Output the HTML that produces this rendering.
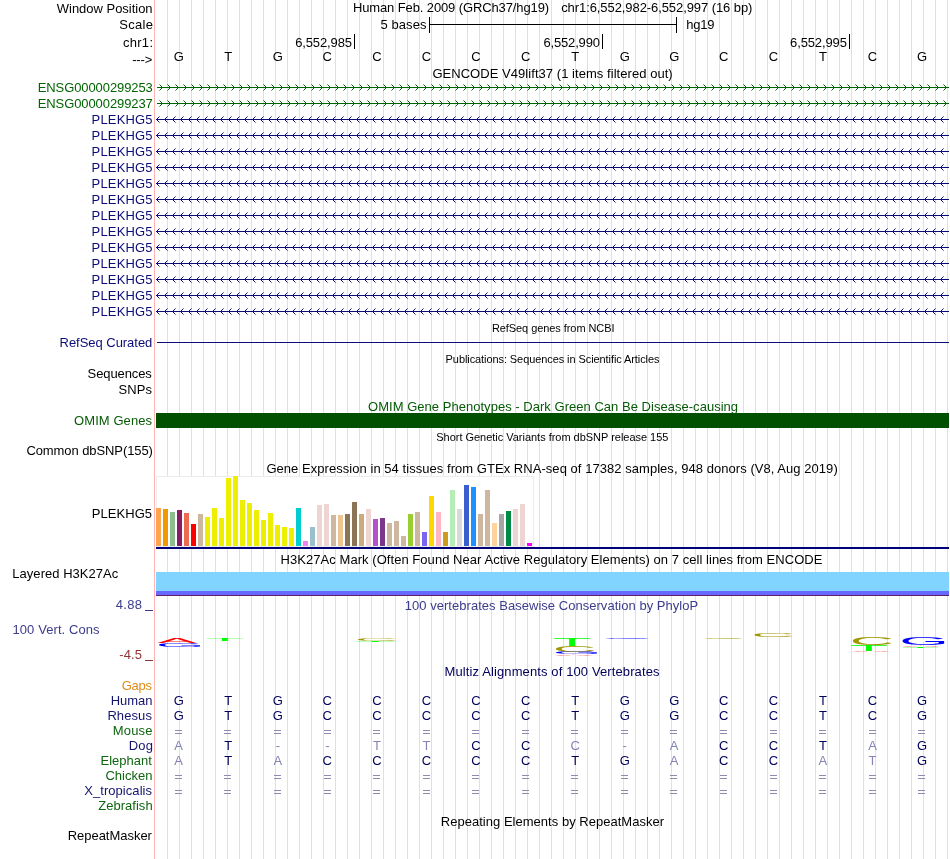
<!DOCTYPE html><html><head><meta charset="utf-8"><title>UCSC Genome Browser</title><style>
html,body{margin:0;padding:0;background:#fff;overflow:hidden}svg{display:block;will-change:transform}
text{font-family:"Liberation Sans",sans-serif;font-size:13px;fill:#000}
.c{text-anchor:middle}
.nv{fill:#0c0c78}.gr{fill:#006400}.bl{fill:#00005a}.lt{fill:#8484b6}
</style></head><body>
<svg width="950" height="859" viewBox="0 0 950 859">
<rect width="950" height="859" fill="#fff"/>
<path d="M167.5 0V859M179.5 0V859M191.5 0V859M203.5 0V859M215.5 0V859M227.5 0V859M239.5 0V859M251.5 0V859M263.5 0V859M275.5 0V859M287.5 0V859M299.5 0V859M311.5 0V859M323.5 0V859M335.5 0V859M347.5 0V859M359.5 0V859M371.5 0V859M383.5 0V859M395.5 0V859M407.5 0V859M419.5 0V859M431.5 0V859M443.5 0V859M455.5 0V859M467.5 0V859M479.5 0V859M491.5 0V859M503.5 0V859M515.5 0V859M527.5 0V859M539.5 0V859M551.5 0V859M563.5 0V859M575.5 0V859M587.5 0V859M599.5 0V859M611.5 0V859M623.5 0V859M635.5 0V859M647.5 0V859M659.5 0V859M671.5 0V859M683.5 0V859M695.5 0V859M707.5 0V859M719.5 0V859M731.5 0V859M743.5 0V859M755.5 0V859M767.5 0V859M779.5 0V859M791.5 0V859M803.5 0V859M815.5 0V859M827.5 0V859M839.5 0V859M851.5 0V859M863.5 0V859M875.5 0V859M887.5 0V859M899.5 0V859M911.5 0V859M923.5 0V859M935.5 0V859M947.5 0V859" stroke="#dcdcff" stroke-width="1" fill="none" shape-rendering="crispEdges"/>
<rect x="154" y="0" width="1" height="859" fill="#ffb4b4"/>
<text x="56.80" transform="translate(0 12.6) scale(1 1.05)" style="letter-spacing:-0.014px">Window Position</text>
<text x="119.35" transform="translate(0 29.4) scale(1 1.05)" style="letter-spacing:0.300px">Scale</text>
<text x="122.95" transform="translate(0 46.8) scale(1 1.05)" style="letter-spacing:0.300px">chr1:</text>
<text x="132.20" transform="translate(0 63.9) scale(1 1.05)" style="letter-spacing:-0.167px">---&gt;</text>
<text x="352.90" transform="translate(0 11.9) scale(1 1.05)" style="letter-spacing:-0.107px">Human Feb. 2009 (GRCh37/hg19)</text>
<text x="561.20" transform="translate(0 11.9) scale(1 1.05)" style="letter-spacing:-0.074px">chr1:6,552,982-6,552,997 (16 bp)</text>
<text x="380.40" transform="translate(0 28.7) scale(1 1.05)" style="letter-spacing:0.100px">5 bases</text>
<text x="686.20" transform="translate(0 28.7) scale(1 1.05)" style="letter-spacing:-0.200px">hg19</text>
<path d="M429.5 17V33M676.5 17V33M429 24.5H677" stroke="#000" fill="none" shape-rendering="crispEdges"/>
<text x="295.20" transform="translate(0 47) scale(1 1.05)" style="letter-spacing:-0.125px">6,552,985</text>
<rect x="354" y="34" width="1" height="15" fill="#000"/>
<text x="543.50" transform="translate(0 47) scale(1 1.05)" style="letter-spacing:-0.162px">6,552,990</text>
<rect x="602" y="34" width="1" height="15" fill="#000"/>
<text x="790.10" transform="translate(0 47) scale(1 1.05)" style="letter-spacing:-0.125px">6,552,995</text>
<rect x="849" y="34" width="1" height="15" fill="#000"/>
<text x="178.7" transform="translate(0 61) scale(1 1.05)" class="c">G</text>
<text x="228.2" transform="translate(0 61) scale(1 1.05)" class="c">T</text>
<text x="277.8" transform="translate(0 61) scale(1 1.05)" class="c">G</text>
<text x="327.3" transform="translate(0 61) scale(1 1.05)" class="c">C</text>
<text x="376.9" transform="translate(0 61) scale(1 1.05)" class="c">C</text>
<text x="426.5" transform="translate(0 61) scale(1 1.05)" class="c">C</text>
<text x="476.0" transform="translate(0 61) scale(1 1.05)" class="c">C</text>
<text x="525.6" transform="translate(0 61) scale(1 1.05)" class="c">C</text>
<text x="575.1" transform="translate(0 61) scale(1 1.05)" class="c">T</text>
<text x="624.7" transform="translate(0 61) scale(1 1.05)" class="c">G</text>
<text x="674.2" transform="translate(0 61) scale(1 1.05)" class="c">G</text>
<text x="723.8" transform="translate(0 61) scale(1 1.05)" class="c">C</text>
<text x="773.4" transform="translate(0 61) scale(1 1.05)" class="c">C</text>
<text x="822.9" transform="translate(0 61) scale(1 1.05)" class="c">T</text>
<text x="872.5" transform="translate(0 61) scale(1 1.05)" class="c">C</text>
<text x="922.1" transform="translate(0 61) scale(1 1.05)" class="c">G</text>
<text x="432.40" transform="translate(0 77.7) scale(1 1.05)" style="letter-spacing:0.056px">GENCODE V49lift37 (1 items filtered out)</text>
<text x="37.70" transform="translate(0 91.8) scale(1 1.05)" style="letter-spacing:-0.079px;fill:#006400">ENSG00000299253</text>
<rect x="157" y="87" width="792" height="1" fill="#006400"/>
<path d="M159.5 84.5l3 3l-3 3M167.5 84.5l3 3l-3 3M175.5 84.5l3 3l-3 3M183.5 84.5l3 3l-3 3M191.5 84.5l3 3l-3 3M199.5 84.5l3 3l-3 3M207.5 84.5l3 3l-3 3M215.5 84.5l3 3l-3 3M223.5 84.5l3 3l-3 3M231.5 84.5l3 3l-3 3M239.5 84.5l3 3l-3 3M247.5 84.5l3 3l-3 3M255.5 84.5l3 3l-3 3M263.5 84.5l3 3l-3 3M271.5 84.5l3 3l-3 3M279.5 84.5l3 3l-3 3M287.5 84.5l3 3l-3 3M295.5 84.5l3 3l-3 3M303.5 84.5l3 3l-3 3M311.5 84.5l3 3l-3 3M319.5 84.5l3 3l-3 3M327.5 84.5l3 3l-3 3M335.5 84.5l3 3l-3 3M343.5 84.5l3 3l-3 3M351.5 84.5l3 3l-3 3M359.5 84.5l3 3l-3 3M367.5 84.5l3 3l-3 3M375.5 84.5l3 3l-3 3M383.5 84.5l3 3l-3 3M391.5 84.5l3 3l-3 3M399.5 84.5l3 3l-3 3M407.5 84.5l3 3l-3 3M415.5 84.5l3 3l-3 3M423.5 84.5l3 3l-3 3M431.5 84.5l3 3l-3 3M439.5 84.5l3 3l-3 3M447.5 84.5l3 3l-3 3M455.5 84.5l3 3l-3 3M463.5 84.5l3 3l-3 3M471.5 84.5l3 3l-3 3M479.5 84.5l3 3l-3 3M487.5 84.5l3 3l-3 3M495.5 84.5l3 3l-3 3M503.5 84.5l3 3l-3 3M511.5 84.5l3 3l-3 3M519.5 84.5l3 3l-3 3M527.5 84.5l3 3l-3 3M535.5 84.5l3 3l-3 3M543.5 84.5l3 3l-3 3M551.5 84.5l3 3l-3 3M559.5 84.5l3 3l-3 3M567.5 84.5l3 3l-3 3M575.5 84.5l3 3l-3 3M583.5 84.5l3 3l-3 3M591.5 84.5l3 3l-3 3M599.5 84.5l3 3l-3 3M607.5 84.5l3 3l-3 3M615.5 84.5l3 3l-3 3M623.5 84.5l3 3l-3 3M631.5 84.5l3 3l-3 3M639.5 84.5l3 3l-3 3M647.5 84.5l3 3l-3 3M655.5 84.5l3 3l-3 3M663.5 84.5l3 3l-3 3M671.5 84.5l3 3l-3 3M679.5 84.5l3 3l-3 3M687.5 84.5l3 3l-3 3M695.5 84.5l3 3l-3 3M703.5 84.5l3 3l-3 3M711.5 84.5l3 3l-3 3M719.5 84.5l3 3l-3 3M727.5 84.5l3 3l-3 3M735.5 84.5l3 3l-3 3M743.5 84.5l3 3l-3 3M751.5 84.5l3 3l-3 3M759.5 84.5l3 3l-3 3M767.5 84.5l3 3l-3 3M775.5 84.5l3 3l-3 3M783.5 84.5l3 3l-3 3M791.5 84.5l3 3l-3 3M799.5 84.5l3 3l-3 3M807.5 84.5l3 3l-3 3M815.5 84.5l3 3l-3 3M823.5 84.5l3 3l-3 3M831.5 84.5l3 3l-3 3M839.5 84.5l3 3l-3 3M847.5 84.5l3 3l-3 3M855.5 84.5l3 3l-3 3M863.5 84.5l3 3l-3 3M871.5 84.5l3 3l-3 3M879.5 84.5l3 3l-3 3M887.5 84.5l3 3l-3 3M895.5 84.5l3 3l-3 3M903.5 84.5l3 3l-3 3M911.5 84.5l3 3l-3 3M919.5 84.5l3 3l-3 3M927.5 84.5l3 3l-3 3M935.5 84.5l3 3l-3 3M943.5 84.5l3 3l-3 3" stroke="#006400" stroke-width="1" fill="none"/>
<text x="37.70" transform="translate(0 107.8) scale(1 1.05)" style="letter-spacing:-0.079px;fill:#006400">ENSG00000299237</text>
<rect x="157" y="103" width="792" height="1" fill="#006400"/>
<path d="M159.5 100.5l3 3l-3 3M167.5 100.5l3 3l-3 3M175.5 100.5l3 3l-3 3M183.5 100.5l3 3l-3 3M191.5 100.5l3 3l-3 3M199.5 100.5l3 3l-3 3M207.5 100.5l3 3l-3 3M215.5 100.5l3 3l-3 3M223.5 100.5l3 3l-3 3M231.5 100.5l3 3l-3 3M239.5 100.5l3 3l-3 3M247.5 100.5l3 3l-3 3M255.5 100.5l3 3l-3 3M263.5 100.5l3 3l-3 3M271.5 100.5l3 3l-3 3M279.5 100.5l3 3l-3 3M287.5 100.5l3 3l-3 3M295.5 100.5l3 3l-3 3M303.5 100.5l3 3l-3 3M311.5 100.5l3 3l-3 3M319.5 100.5l3 3l-3 3M327.5 100.5l3 3l-3 3M335.5 100.5l3 3l-3 3M343.5 100.5l3 3l-3 3M351.5 100.5l3 3l-3 3M359.5 100.5l3 3l-3 3M367.5 100.5l3 3l-3 3M375.5 100.5l3 3l-3 3M383.5 100.5l3 3l-3 3M391.5 100.5l3 3l-3 3M399.5 100.5l3 3l-3 3M407.5 100.5l3 3l-3 3M415.5 100.5l3 3l-3 3M423.5 100.5l3 3l-3 3M431.5 100.5l3 3l-3 3M439.5 100.5l3 3l-3 3M447.5 100.5l3 3l-3 3M455.5 100.5l3 3l-3 3M463.5 100.5l3 3l-3 3M471.5 100.5l3 3l-3 3M479.5 100.5l3 3l-3 3M487.5 100.5l3 3l-3 3M495.5 100.5l3 3l-3 3M503.5 100.5l3 3l-3 3M511.5 100.5l3 3l-3 3M519.5 100.5l3 3l-3 3M527.5 100.5l3 3l-3 3M535.5 100.5l3 3l-3 3M543.5 100.5l3 3l-3 3M551.5 100.5l3 3l-3 3M559.5 100.5l3 3l-3 3M567.5 100.5l3 3l-3 3M575.5 100.5l3 3l-3 3M583.5 100.5l3 3l-3 3M591.5 100.5l3 3l-3 3M599.5 100.5l3 3l-3 3M607.5 100.5l3 3l-3 3M615.5 100.5l3 3l-3 3M623.5 100.5l3 3l-3 3M631.5 100.5l3 3l-3 3M639.5 100.5l3 3l-3 3M647.5 100.5l3 3l-3 3M655.5 100.5l3 3l-3 3M663.5 100.5l3 3l-3 3M671.5 100.5l3 3l-3 3M679.5 100.5l3 3l-3 3M687.5 100.5l3 3l-3 3M695.5 100.5l3 3l-3 3M703.5 100.5l3 3l-3 3M711.5 100.5l3 3l-3 3M719.5 100.5l3 3l-3 3M727.5 100.5l3 3l-3 3M735.5 100.5l3 3l-3 3M743.5 100.5l3 3l-3 3M751.5 100.5l3 3l-3 3M759.5 100.5l3 3l-3 3M767.5 100.5l3 3l-3 3M775.5 100.5l3 3l-3 3M783.5 100.5l3 3l-3 3M791.5 100.5l3 3l-3 3M799.5 100.5l3 3l-3 3M807.5 100.5l3 3l-3 3M815.5 100.5l3 3l-3 3M823.5 100.5l3 3l-3 3M831.5 100.5l3 3l-3 3M839.5 100.5l3 3l-3 3M847.5 100.5l3 3l-3 3M855.5 100.5l3 3l-3 3M863.5 100.5l3 3l-3 3M871.5 100.5l3 3l-3 3M879.5 100.5l3 3l-3 3M887.5 100.5l3 3l-3 3M895.5 100.5l3 3l-3 3M903.5 100.5l3 3l-3 3M911.5 100.5l3 3l-3 3M919.5 100.5l3 3l-3 3M927.5 100.5l3 3l-3 3M935.5 100.5l3 3l-3 3M943.5 100.5l3 3l-3 3" stroke="#006400" stroke-width="1" fill="none"/>
<text x="91.60" transform="translate(0 123.8) scale(1 1.05)" style="letter-spacing:0.167px;fill:#0c0c78">PLEKHG5</text>
<rect x="156" y="119" width="793" height="1" fill="#0c0c78"/>
<path d="M159.5 116.5l-3 3l3 3M167.5 116.5l-3 3l3 3M175.5 116.5l-3 3l3 3M183.5 116.5l-3 3l3 3M191.5 116.5l-3 3l3 3M199.5 116.5l-3 3l3 3M207.5 116.5l-3 3l3 3M215.5 116.5l-3 3l3 3M223.5 116.5l-3 3l3 3M231.5 116.5l-3 3l3 3M239.5 116.5l-3 3l3 3M247.5 116.5l-3 3l3 3M255.5 116.5l-3 3l3 3M263.5 116.5l-3 3l3 3M271.5 116.5l-3 3l3 3M279.5 116.5l-3 3l3 3M287.5 116.5l-3 3l3 3M295.5 116.5l-3 3l3 3M303.5 116.5l-3 3l3 3M311.5 116.5l-3 3l3 3M319.5 116.5l-3 3l3 3M327.5 116.5l-3 3l3 3M335.5 116.5l-3 3l3 3M343.5 116.5l-3 3l3 3M351.5 116.5l-3 3l3 3M359.5 116.5l-3 3l3 3M367.5 116.5l-3 3l3 3M375.5 116.5l-3 3l3 3M383.5 116.5l-3 3l3 3M391.5 116.5l-3 3l3 3M399.5 116.5l-3 3l3 3M407.5 116.5l-3 3l3 3M415.5 116.5l-3 3l3 3M423.5 116.5l-3 3l3 3M431.5 116.5l-3 3l3 3M439.5 116.5l-3 3l3 3M447.5 116.5l-3 3l3 3M455.5 116.5l-3 3l3 3M463.5 116.5l-3 3l3 3M471.5 116.5l-3 3l3 3M479.5 116.5l-3 3l3 3M487.5 116.5l-3 3l3 3M495.5 116.5l-3 3l3 3M503.5 116.5l-3 3l3 3M511.5 116.5l-3 3l3 3M519.5 116.5l-3 3l3 3M527.5 116.5l-3 3l3 3M535.5 116.5l-3 3l3 3M543.5 116.5l-3 3l3 3M551.5 116.5l-3 3l3 3M559.5 116.5l-3 3l3 3M567.5 116.5l-3 3l3 3M575.5 116.5l-3 3l3 3M583.5 116.5l-3 3l3 3M591.5 116.5l-3 3l3 3M599.5 116.5l-3 3l3 3M607.5 116.5l-3 3l3 3M615.5 116.5l-3 3l3 3M623.5 116.5l-3 3l3 3M631.5 116.5l-3 3l3 3M639.5 116.5l-3 3l3 3M647.5 116.5l-3 3l3 3M655.5 116.5l-3 3l3 3M663.5 116.5l-3 3l3 3M671.5 116.5l-3 3l3 3M679.5 116.5l-3 3l3 3M687.5 116.5l-3 3l3 3M695.5 116.5l-3 3l3 3M703.5 116.5l-3 3l3 3M711.5 116.5l-3 3l3 3M719.5 116.5l-3 3l3 3M727.5 116.5l-3 3l3 3M735.5 116.5l-3 3l3 3M743.5 116.5l-3 3l3 3M751.5 116.5l-3 3l3 3M759.5 116.5l-3 3l3 3M767.5 116.5l-3 3l3 3M775.5 116.5l-3 3l3 3M783.5 116.5l-3 3l3 3M791.5 116.5l-3 3l3 3M799.5 116.5l-3 3l3 3M807.5 116.5l-3 3l3 3M815.5 116.5l-3 3l3 3M823.5 116.5l-3 3l3 3M831.5 116.5l-3 3l3 3M839.5 116.5l-3 3l3 3M847.5 116.5l-3 3l3 3M855.5 116.5l-3 3l3 3M863.5 116.5l-3 3l3 3M871.5 116.5l-3 3l3 3M879.5 116.5l-3 3l3 3M887.5 116.5l-3 3l3 3M895.5 116.5l-3 3l3 3M903.5 116.5l-3 3l3 3M911.5 116.5l-3 3l3 3M919.5 116.5l-3 3l3 3M927.5 116.5l-3 3l3 3M935.5 116.5l-3 3l3 3M943.5 116.5l-3 3l3 3" stroke="#0c0c78" stroke-width="1" fill="none"/>
<text x="91.60" transform="translate(0 139.8) scale(1 1.05)" style="letter-spacing:0.167px;fill:#0c0c78">PLEKHG5</text>
<rect x="156" y="135" width="793" height="1" fill="#0c0c78"/>
<path d="M159.5 132.5l-3 3l3 3M167.5 132.5l-3 3l3 3M175.5 132.5l-3 3l3 3M183.5 132.5l-3 3l3 3M191.5 132.5l-3 3l3 3M199.5 132.5l-3 3l3 3M207.5 132.5l-3 3l3 3M215.5 132.5l-3 3l3 3M223.5 132.5l-3 3l3 3M231.5 132.5l-3 3l3 3M239.5 132.5l-3 3l3 3M247.5 132.5l-3 3l3 3M255.5 132.5l-3 3l3 3M263.5 132.5l-3 3l3 3M271.5 132.5l-3 3l3 3M279.5 132.5l-3 3l3 3M287.5 132.5l-3 3l3 3M295.5 132.5l-3 3l3 3M303.5 132.5l-3 3l3 3M311.5 132.5l-3 3l3 3M319.5 132.5l-3 3l3 3M327.5 132.5l-3 3l3 3M335.5 132.5l-3 3l3 3M343.5 132.5l-3 3l3 3M351.5 132.5l-3 3l3 3M359.5 132.5l-3 3l3 3M367.5 132.5l-3 3l3 3M375.5 132.5l-3 3l3 3M383.5 132.5l-3 3l3 3M391.5 132.5l-3 3l3 3M399.5 132.5l-3 3l3 3M407.5 132.5l-3 3l3 3M415.5 132.5l-3 3l3 3M423.5 132.5l-3 3l3 3M431.5 132.5l-3 3l3 3M439.5 132.5l-3 3l3 3M447.5 132.5l-3 3l3 3M455.5 132.5l-3 3l3 3M463.5 132.5l-3 3l3 3M471.5 132.5l-3 3l3 3M479.5 132.5l-3 3l3 3M487.5 132.5l-3 3l3 3M495.5 132.5l-3 3l3 3M503.5 132.5l-3 3l3 3M511.5 132.5l-3 3l3 3M519.5 132.5l-3 3l3 3M527.5 132.5l-3 3l3 3M535.5 132.5l-3 3l3 3M543.5 132.5l-3 3l3 3M551.5 132.5l-3 3l3 3M559.5 132.5l-3 3l3 3M567.5 132.5l-3 3l3 3M575.5 132.5l-3 3l3 3M583.5 132.5l-3 3l3 3M591.5 132.5l-3 3l3 3M599.5 132.5l-3 3l3 3M607.5 132.5l-3 3l3 3M615.5 132.5l-3 3l3 3M623.5 132.5l-3 3l3 3M631.5 132.5l-3 3l3 3M639.5 132.5l-3 3l3 3M647.5 132.5l-3 3l3 3M655.5 132.5l-3 3l3 3M663.5 132.5l-3 3l3 3M671.5 132.5l-3 3l3 3M679.5 132.5l-3 3l3 3M687.5 132.5l-3 3l3 3M695.5 132.5l-3 3l3 3M703.5 132.5l-3 3l3 3M711.5 132.5l-3 3l3 3M719.5 132.5l-3 3l3 3M727.5 132.5l-3 3l3 3M735.5 132.5l-3 3l3 3M743.5 132.5l-3 3l3 3M751.5 132.5l-3 3l3 3M759.5 132.5l-3 3l3 3M767.5 132.5l-3 3l3 3M775.5 132.5l-3 3l3 3M783.5 132.5l-3 3l3 3M791.5 132.5l-3 3l3 3M799.5 132.5l-3 3l3 3M807.5 132.5l-3 3l3 3M815.5 132.5l-3 3l3 3M823.5 132.5l-3 3l3 3M831.5 132.5l-3 3l3 3M839.5 132.5l-3 3l3 3M847.5 132.5l-3 3l3 3M855.5 132.5l-3 3l3 3M863.5 132.5l-3 3l3 3M871.5 132.5l-3 3l3 3M879.5 132.5l-3 3l3 3M887.5 132.5l-3 3l3 3M895.5 132.5l-3 3l3 3M903.5 132.5l-3 3l3 3M911.5 132.5l-3 3l3 3M919.5 132.5l-3 3l3 3M927.5 132.5l-3 3l3 3M935.5 132.5l-3 3l3 3M943.5 132.5l-3 3l3 3" stroke="#0c0c78" stroke-width="1" fill="none"/>
<text x="91.60" transform="translate(0 155.8) scale(1 1.05)" style="letter-spacing:0.167px;fill:#0c0c78">PLEKHG5</text>
<rect x="156" y="151" width="793" height="1" fill="#0c0c78"/>
<path d="M159.5 148.5l-3 3l3 3M167.5 148.5l-3 3l3 3M175.5 148.5l-3 3l3 3M183.5 148.5l-3 3l3 3M191.5 148.5l-3 3l3 3M199.5 148.5l-3 3l3 3M207.5 148.5l-3 3l3 3M215.5 148.5l-3 3l3 3M223.5 148.5l-3 3l3 3M231.5 148.5l-3 3l3 3M239.5 148.5l-3 3l3 3M247.5 148.5l-3 3l3 3M255.5 148.5l-3 3l3 3M263.5 148.5l-3 3l3 3M271.5 148.5l-3 3l3 3M279.5 148.5l-3 3l3 3M287.5 148.5l-3 3l3 3M295.5 148.5l-3 3l3 3M303.5 148.5l-3 3l3 3M311.5 148.5l-3 3l3 3M319.5 148.5l-3 3l3 3M327.5 148.5l-3 3l3 3M335.5 148.5l-3 3l3 3M343.5 148.5l-3 3l3 3M351.5 148.5l-3 3l3 3M359.5 148.5l-3 3l3 3M367.5 148.5l-3 3l3 3M375.5 148.5l-3 3l3 3M383.5 148.5l-3 3l3 3M391.5 148.5l-3 3l3 3M399.5 148.5l-3 3l3 3M407.5 148.5l-3 3l3 3M415.5 148.5l-3 3l3 3M423.5 148.5l-3 3l3 3M431.5 148.5l-3 3l3 3M439.5 148.5l-3 3l3 3M447.5 148.5l-3 3l3 3M455.5 148.5l-3 3l3 3M463.5 148.5l-3 3l3 3M471.5 148.5l-3 3l3 3M479.5 148.5l-3 3l3 3M487.5 148.5l-3 3l3 3M495.5 148.5l-3 3l3 3M503.5 148.5l-3 3l3 3M511.5 148.5l-3 3l3 3M519.5 148.5l-3 3l3 3M527.5 148.5l-3 3l3 3M535.5 148.5l-3 3l3 3M543.5 148.5l-3 3l3 3M551.5 148.5l-3 3l3 3M559.5 148.5l-3 3l3 3M567.5 148.5l-3 3l3 3M575.5 148.5l-3 3l3 3M583.5 148.5l-3 3l3 3M591.5 148.5l-3 3l3 3M599.5 148.5l-3 3l3 3M607.5 148.5l-3 3l3 3M615.5 148.5l-3 3l3 3M623.5 148.5l-3 3l3 3M631.5 148.5l-3 3l3 3M639.5 148.5l-3 3l3 3M647.5 148.5l-3 3l3 3M655.5 148.5l-3 3l3 3M663.5 148.5l-3 3l3 3M671.5 148.5l-3 3l3 3M679.5 148.5l-3 3l3 3M687.5 148.5l-3 3l3 3M695.5 148.5l-3 3l3 3M703.5 148.5l-3 3l3 3M711.5 148.5l-3 3l3 3M719.5 148.5l-3 3l3 3M727.5 148.5l-3 3l3 3M735.5 148.5l-3 3l3 3M743.5 148.5l-3 3l3 3M751.5 148.5l-3 3l3 3M759.5 148.5l-3 3l3 3M767.5 148.5l-3 3l3 3M775.5 148.5l-3 3l3 3M783.5 148.5l-3 3l3 3M791.5 148.5l-3 3l3 3M799.5 148.5l-3 3l3 3M807.5 148.5l-3 3l3 3M815.5 148.5l-3 3l3 3M823.5 148.5l-3 3l3 3M831.5 148.5l-3 3l3 3M839.5 148.5l-3 3l3 3M847.5 148.5l-3 3l3 3M855.5 148.5l-3 3l3 3M863.5 148.5l-3 3l3 3M871.5 148.5l-3 3l3 3M879.5 148.5l-3 3l3 3M887.5 148.5l-3 3l3 3M895.5 148.5l-3 3l3 3M903.5 148.5l-3 3l3 3M911.5 148.5l-3 3l3 3M919.5 148.5l-3 3l3 3M927.5 148.5l-3 3l3 3M935.5 148.5l-3 3l3 3M943.5 148.5l-3 3l3 3" stroke="#0c0c78" stroke-width="1" fill="none"/>
<text x="91.60" transform="translate(0 171.8) scale(1 1.05)" style="letter-spacing:0.167px;fill:#0c0c78">PLEKHG5</text>
<rect x="156" y="167" width="793" height="1" fill="#0c0c78"/>
<path d="M159.5 164.5l-3 3l3 3M167.5 164.5l-3 3l3 3M175.5 164.5l-3 3l3 3M183.5 164.5l-3 3l3 3M191.5 164.5l-3 3l3 3M199.5 164.5l-3 3l3 3M207.5 164.5l-3 3l3 3M215.5 164.5l-3 3l3 3M223.5 164.5l-3 3l3 3M231.5 164.5l-3 3l3 3M239.5 164.5l-3 3l3 3M247.5 164.5l-3 3l3 3M255.5 164.5l-3 3l3 3M263.5 164.5l-3 3l3 3M271.5 164.5l-3 3l3 3M279.5 164.5l-3 3l3 3M287.5 164.5l-3 3l3 3M295.5 164.5l-3 3l3 3M303.5 164.5l-3 3l3 3M311.5 164.5l-3 3l3 3M319.5 164.5l-3 3l3 3M327.5 164.5l-3 3l3 3M335.5 164.5l-3 3l3 3M343.5 164.5l-3 3l3 3M351.5 164.5l-3 3l3 3M359.5 164.5l-3 3l3 3M367.5 164.5l-3 3l3 3M375.5 164.5l-3 3l3 3M383.5 164.5l-3 3l3 3M391.5 164.5l-3 3l3 3M399.5 164.5l-3 3l3 3M407.5 164.5l-3 3l3 3M415.5 164.5l-3 3l3 3M423.5 164.5l-3 3l3 3M431.5 164.5l-3 3l3 3M439.5 164.5l-3 3l3 3M447.5 164.5l-3 3l3 3M455.5 164.5l-3 3l3 3M463.5 164.5l-3 3l3 3M471.5 164.5l-3 3l3 3M479.5 164.5l-3 3l3 3M487.5 164.5l-3 3l3 3M495.5 164.5l-3 3l3 3M503.5 164.5l-3 3l3 3M511.5 164.5l-3 3l3 3M519.5 164.5l-3 3l3 3M527.5 164.5l-3 3l3 3M535.5 164.5l-3 3l3 3M543.5 164.5l-3 3l3 3M551.5 164.5l-3 3l3 3M559.5 164.5l-3 3l3 3M567.5 164.5l-3 3l3 3M575.5 164.5l-3 3l3 3M583.5 164.5l-3 3l3 3M591.5 164.5l-3 3l3 3M599.5 164.5l-3 3l3 3M607.5 164.5l-3 3l3 3M615.5 164.5l-3 3l3 3M623.5 164.5l-3 3l3 3M631.5 164.5l-3 3l3 3M639.5 164.5l-3 3l3 3M647.5 164.5l-3 3l3 3M655.5 164.5l-3 3l3 3M663.5 164.5l-3 3l3 3M671.5 164.5l-3 3l3 3M679.5 164.5l-3 3l3 3M687.5 164.5l-3 3l3 3M695.5 164.5l-3 3l3 3M703.5 164.5l-3 3l3 3M711.5 164.5l-3 3l3 3M719.5 164.5l-3 3l3 3M727.5 164.5l-3 3l3 3M735.5 164.5l-3 3l3 3M743.5 164.5l-3 3l3 3M751.5 164.5l-3 3l3 3M759.5 164.5l-3 3l3 3M767.5 164.5l-3 3l3 3M775.5 164.5l-3 3l3 3M783.5 164.5l-3 3l3 3M791.5 164.5l-3 3l3 3M799.5 164.5l-3 3l3 3M807.5 164.5l-3 3l3 3M815.5 164.5l-3 3l3 3M823.5 164.5l-3 3l3 3M831.5 164.5l-3 3l3 3M839.5 164.5l-3 3l3 3M847.5 164.5l-3 3l3 3M855.5 164.5l-3 3l3 3M863.5 164.5l-3 3l3 3M871.5 164.5l-3 3l3 3M879.5 164.5l-3 3l3 3M887.5 164.5l-3 3l3 3M895.5 164.5l-3 3l3 3M903.5 164.5l-3 3l3 3M911.5 164.5l-3 3l3 3M919.5 164.5l-3 3l3 3M927.5 164.5l-3 3l3 3M935.5 164.5l-3 3l3 3M943.5 164.5l-3 3l3 3" stroke="#0c0c78" stroke-width="1" fill="none"/>
<text x="91.60" transform="translate(0 187.8) scale(1 1.05)" style="letter-spacing:0.167px;fill:#0c0c78">PLEKHG5</text>
<rect x="156" y="183" width="793" height="1" fill="#0c0c78"/>
<path d="M159.5 180.5l-3 3l3 3M167.5 180.5l-3 3l3 3M175.5 180.5l-3 3l3 3M183.5 180.5l-3 3l3 3M191.5 180.5l-3 3l3 3M199.5 180.5l-3 3l3 3M207.5 180.5l-3 3l3 3M215.5 180.5l-3 3l3 3M223.5 180.5l-3 3l3 3M231.5 180.5l-3 3l3 3M239.5 180.5l-3 3l3 3M247.5 180.5l-3 3l3 3M255.5 180.5l-3 3l3 3M263.5 180.5l-3 3l3 3M271.5 180.5l-3 3l3 3M279.5 180.5l-3 3l3 3M287.5 180.5l-3 3l3 3M295.5 180.5l-3 3l3 3M303.5 180.5l-3 3l3 3M311.5 180.5l-3 3l3 3M319.5 180.5l-3 3l3 3M327.5 180.5l-3 3l3 3M335.5 180.5l-3 3l3 3M343.5 180.5l-3 3l3 3M351.5 180.5l-3 3l3 3M359.5 180.5l-3 3l3 3M367.5 180.5l-3 3l3 3M375.5 180.5l-3 3l3 3M383.5 180.5l-3 3l3 3M391.5 180.5l-3 3l3 3M399.5 180.5l-3 3l3 3M407.5 180.5l-3 3l3 3M415.5 180.5l-3 3l3 3M423.5 180.5l-3 3l3 3M431.5 180.5l-3 3l3 3M439.5 180.5l-3 3l3 3M447.5 180.5l-3 3l3 3M455.5 180.5l-3 3l3 3M463.5 180.5l-3 3l3 3M471.5 180.5l-3 3l3 3M479.5 180.5l-3 3l3 3M487.5 180.5l-3 3l3 3M495.5 180.5l-3 3l3 3M503.5 180.5l-3 3l3 3M511.5 180.5l-3 3l3 3M519.5 180.5l-3 3l3 3M527.5 180.5l-3 3l3 3M535.5 180.5l-3 3l3 3M543.5 180.5l-3 3l3 3M551.5 180.5l-3 3l3 3M559.5 180.5l-3 3l3 3M567.5 180.5l-3 3l3 3M575.5 180.5l-3 3l3 3M583.5 180.5l-3 3l3 3M591.5 180.5l-3 3l3 3M599.5 180.5l-3 3l3 3M607.5 180.5l-3 3l3 3M615.5 180.5l-3 3l3 3M623.5 180.5l-3 3l3 3M631.5 180.5l-3 3l3 3M639.5 180.5l-3 3l3 3M647.5 180.5l-3 3l3 3M655.5 180.5l-3 3l3 3M663.5 180.5l-3 3l3 3M671.5 180.5l-3 3l3 3M679.5 180.5l-3 3l3 3M687.5 180.5l-3 3l3 3M695.5 180.5l-3 3l3 3M703.5 180.5l-3 3l3 3M711.5 180.5l-3 3l3 3M719.5 180.5l-3 3l3 3M727.5 180.5l-3 3l3 3M735.5 180.5l-3 3l3 3M743.5 180.5l-3 3l3 3M751.5 180.5l-3 3l3 3M759.5 180.5l-3 3l3 3M767.5 180.5l-3 3l3 3M775.5 180.5l-3 3l3 3M783.5 180.5l-3 3l3 3M791.5 180.5l-3 3l3 3M799.5 180.5l-3 3l3 3M807.5 180.5l-3 3l3 3M815.5 180.5l-3 3l3 3M823.5 180.5l-3 3l3 3M831.5 180.5l-3 3l3 3M839.5 180.5l-3 3l3 3M847.5 180.5l-3 3l3 3M855.5 180.5l-3 3l3 3M863.5 180.5l-3 3l3 3M871.5 180.5l-3 3l3 3M879.5 180.5l-3 3l3 3M887.5 180.5l-3 3l3 3M895.5 180.5l-3 3l3 3M903.5 180.5l-3 3l3 3M911.5 180.5l-3 3l3 3M919.5 180.5l-3 3l3 3M927.5 180.5l-3 3l3 3M935.5 180.5l-3 3l3 3M943.5 180.5l-3 3l3 3" stroke="#0c0c78" stroke-width="1" fill="none"/>
<text x="91.60" transform="translate(0 203.8) scale(1 1.05)" style="letter-spacing:0.167px;fill:#0c0c78">PLEKHG5</text>
<rect x="156" y="199" width="793" height="1" fill="#0c0c78"/>
<path d="M159.5 196.5l-3 3l3 3M167.5 196.5l-3 3l3 3M175.5 196.5l-3 3l3 3M183.5 196.5l-3 3l3 3M191.5 196.5l-3 3l3 3M199.5 196.5l-3 3l3 3M207.5 196.5l-3 3l3 3M215.5 196.5l-3 3l3 3M223.5 196.5l-3 3l3 3M231.5 196.5l-3 3l3 3M239.5 196.5l-3 3l3 3M247.5 196.5l-3 3l3 3M255.5 196.5l-3 3l3 3M263.5 196.5l-3 3l3 3M271.5 196.5l-3 3l3 3M279.5 196.5l-3 3l3 3M287.5 196.5l-3 3l3 3M295.5 196.5l-3 3l3 3M303.5 196.5l-3 3l3 3M311.5 196.5l-3 3l3 3M319.5 196.5l-3 3l3 3M327.5 196.5l-3 3l3 3M335.5 196.5l-3 3l3 3M343.5 196.5l-3 3l3 3M351.5 196.5l-3 3l3 3M359.5 196.5l-3 3l3 3M367.5 196.5l-3 3l3 3M375.5 196.5l-3 3l3 3M383.5 196.5l-3 3l3 3M391.5 196.5l-3 3l3 3M399.5 196.5l-3 3l3 3M407.5 196.5l-3 3l3 3M415.5 196.5l-3 3l3 3M423.5 196.5l-3 3l3 3M431.5 196.5l-3 3l3 3M439.5 196.5l-3 3l3 3M447.5 196.5l-3 3l3 3M455.5 196.5l-3 3l3 3M463.5 196.5l-3 3l3 3M471.5 196.5l-3 3l3 3M479.5 196.5l-3 3l3 3M487.5 196.5l-3 3l3 3M495.5 196.5l-3 3l3 3M503.5 196.5l-3 3l3 3M511.5 196.5l-3 3l3 3M519.5 196.5l-3 3l3 3M527.5 196.5l-3 3l3 3M535.5 196.5l-3 3l3 3M543.5 196.5l-3 3l3 3M551.5 196.5l-3 3l3 3M559.5 196.5l-3 3l3 3M567.5 196.5l-3 3l3 3M575.5 196.5l-3 3l3 3M583.5 196.5l-3 3l3 3M591.5 196.5l-3 3l3 3M599.5 196.5l-3 3l3 3M607.5 196.5l-3 3l3 3M615.5 196.5l-3 3l3 3M623.5 196.5l-3 3l3 3M631.5 196.5l-3 3l3 3M639.5 196.5l-3 3l3 3M647.5 196.5l-3 3l3 3M655.5 196.5l-3 3l3 3M663.5 196.5l-3 3l3 3M671.5 196.5l-3 3l3 3M679.5 196.5l-3 3l3 3M687.5 196.5l-3 3l3 3M695.5 196.5l-3 3l3 3M703.5 196.5l-3 3l3 3M711.5 196.5l-3 3l3 3M719.5 196.5l-3 3l3 3M727.5 196.5l-3 3l3 3M735.5 196.5l-3 3l3 3M743.5 196.5l-3 3l3 3M751.5 196.5l-3 3l3 3M759.5 196.5l-3 3l3 3M767.5 196.5l-3 3l3 3M775.5 196.5l-3 3l3 3M783.5 196.5l-3 3l3 3M791.5 196.5l-3 3l3 3M799.5 196.5l-3 3l3 3M807.5 196.5l-3 3l3 3M815.5 196.5l-3 3l3 3M823.5 196.5l-3 3l3 3M831.5 196.5l-3 3l3 3M839.5 196.5l-3 3l3 3M847.5 196.5l-3 3l3 3M855.5 196.5l-3 3l3 3M863.5 196.5l-3 3l3 3M871.5 196.5l-3 3l3 3M879.5 196.5l-3 3l3 3M887.5 196.5l-3 3l3 3M895.5 196.5l-3 3l3 3M903.5 196.5l-3 3l3 3M911.5 196.5l-3 3l3 3M919.5 196.5l-3 3l3 3M927.5 196.5l-3 3l3 3M935.5 196.5l-3 3l3 3M943.5 196.5l-3 3l3 3" stroke="#0c0c78" stroke-width="1" fill="none"/>
<text x="91.60" transform="translate(0 219.8) scale(1 1.05)" style="letter-spacing:0.167px;fill:#0c0c78">PLEKHG5</text>
<rect x="156" y="215" width="793" height="1" fill="#0c0c78"/>
<path d="M159.5 212.5l-3 3l3 3M167.5 212.5l-3 3l3 3M175.5 212.5l-3 3l3 3M183.5 212.5l-3 3l3 3M191.5 212.5l-3 3l3 3M199.5 212.5l-3 3l3 3M207.5 212.5l-3 3l3 3M215.5 212.5l-3 3l3 3M223.5 212.5l-3 3l3 3M231.5 212.5l-3 3l3 3M239.5 212.5l-3 3l3 3M247.5 212.5l-3 3l3 3M255.5 212.5l-3 3l3 3M263.5 212.5l-3 3l3 3M271.5 212.5l-3 3l3 3M279.5 212.5l-3 3l3 3M287.5 212.5l-3 3l3 3M295.5 212.5l-3 3l3 3M303.5 212.5l-3 3l3 3M311.5 212.5l-3 3l3 3M319.5 212.5l-3 3l3 3M327.5 212.5l-3 3l3 3M335.5 212.5l-3 3l3 3M343.5 212.5l-3 3l3 3M351.5 212.5l-3 3l3 3M359.5 212.5l-3 3l3 3M367.5 212.5l-3 3l3 3M375.5 212.5l-3 3l3 3M383.5 212.5l-3 3l3 3M391.5 212.5l-3 3l3 3M399.5 212.5l-3 3l3 3M407.5 212.5l-3 3l3 3M415.5 212.5l-3 3l3 3M423.5 212.5l-3 3l3 3M431.5 212.5l-3 3l3 3M439.5 212.5l-3 3l3 3M447.5 212.5l-3 3l3 3M455.5 212.5l-3 3l3 3M463.5 212.5l-3 3l3 3M471.5 212.5l-3 3l3 3M479.5 212.5l-3 3l3 3M487.5 212.5l-3 3l3 3M495.5 212.5l-3 3l3 3M503.5 212.5l-3 3l3 3M511.5 212.5l-3 3l3 3M519.5 212.5l-3 3l3 3M527.5 212.5l-3 3l3 3M535.5 212.5l-3 3l3 3M543.5 212.5l-3 3l3 3M551.5 212.5l-3 3l3 3M559.5 212.5l-3 3l3 3M567.5 212.5l-3 3l3 3M575.5 212.5l-3 3l3 3M583.5 212.5l-3 3l3 3M591.5 212.5l-3 3l3 3M599.5 212.5l-3 3l3 3M607.5 212.5l-3 3l3 3M615.5 212.5l-3 3l3 3M623.5 212.5l-3 3l3 3M631.5 212.5l-3 3l3 3M639.5 212.5l-3 3l3 3M647.5 212.5l-3 3l3 3M655.5 212.5l-3 3l3 3M663.5 212.5l-3 3l3 3M671.5 212.5l-3 3l3 3M679.5 212.5l-3 3l3 3M687.5 212.5l-3 3l3 3M695.5 212.5l-3 3l3 3M703.5 212.5l-3 3l3 3M711.5 212.5l-3 3l3 3M719.5 212.5l-3 3l3 3M727.5 212.5l-3 3l3 3M735.5 212.5l-3 3l3 3M743.5 212.5l-3 3l3 3M751.5 212.5l-3 3l3 3M759.5 212.5l-3 3l3 3M767.5 212.5l-3 3l3 3M775.5 212.5l-3 3l3 3M783.5 212.5l-3 3l3 3M791.5 212.5l-3 3l3 3M799.5 212.5l-3 3l3 3M807.5 212.5l-3 3l3 3M815.5 212.5l-3 3l3 3M823.5 212.5l-3 3l3 3M831.5 212.5l-3 3l3 3M839.5 212.5l-3 3l3 3M847.5 212.5l-3 3l3 3M855.5 212.5l-3 3l3 3M863.5 212.5l-3 3l3 3M871.5 212.5l-3 3l3 3M879.5 212.5l-3 3l3 3M887.5 212.5l-3 3l3 3M895.5 212.5l-3 3l3 3M903.5 212.5l-3 3l3 3M911.5 212.5l-3 3l3 3M919.5 212.5l-3 3l3 3M927.5 212.5l-3 3l3 3M935.5 212.5l-3 3l3 3M943.5 212.5l-3 3l3 3" stroke="#0c0c78" stroke-width="1" fill="none"/>
<text x="91.60" transform="translate(0 235.8) scale(1 1.05)" style="letter-spacing:0.167px;fill:#0c0c78">PLEKHG5</text>
<rect x="156" y="231" width="793" height="1" fill="#0c0c78"/>
<path d="M159.5 228.5l-3 3l3 3M167.5 228.5l-3 3l3 3M175.5 228.5l-3 3l3 3M183.5 228.5l-3 3l3 3M191.5 228.5l-3 3l3 3M199.5 228.5l-3 3l3 3M207.5 228.5l-3 3l3 3M215.5 228.5l-3 3l3 3M223.5 228.5l-3 3l3 3M231.5 228.5l-3 3l3 3M239.5 228.5l-3 3l3 3M247.5 228.5l-3 3l3 3M255.5 228.5l-3 3l3 3M263.5 228.5l-3 3l3 3M271.5 228.5l-3 3l3 3M279.5 228.5l-3 3l3 3M287.5 228.5l-3 3l3 3M295.5 228.5l-3 3l3 3M303.5 228.5l-3 3l3 3M311.5 228.5l-3 3l3 3M319.5 228.5l-3 3l3 3M327.5 228.5l-3 3l3 3M335.5 228.5l-3 3l3 3M343.5 228.5l-3 3l3 3M351.5 228.5l-3 3l3 3M359.5 228.5l-3 3l3 3M367.5 228.5l-3 3l3 3M375.5 228.5l-3 3l3 3M383.5 228.5l-3 3l3 3M391.5 228.5l-3 3l3 3M399.5 228.5l-3 3l3 3M407.5 228.5l-3 3l3 3M415.5 228.5l-3 3l3 3M423.5 228.5l-3 3l3 3M431.5 228.5l-3 3l3 3M439.5 228.5l-3 3l3 3M447.5 228.5l-3 3l3 3M455.5 228.5l-3 3l3 3M463.5 228.5l-3 3l3 3M471.5 228.5l-3 3l3 3M479.5 228.5l-3 3l3 3M487.5 228.5l-3 3l3 3M495.5 228.5l-3 3l3 3M503.5 228.5l-3 3l3 3M511.5 228.5l-3 3l3 3M519.5 228.5l-3 3l3 3M527.5 228.5l-3 3l3 3M535.5 228.5l-3 3l3 3M543.5 228.5l-3 3l3 3M551.5 228.5l-3 3l3 3M559.5 228.5l-3 3l3 3M567.5 228.5l-3 3l3 3M575.5 228.5l-3 3l3 3M583.5 228.5l-3 3l3 3M591.5 228.5l-3 3l3 3M599.5 228.5l-3 3l3 3M607.5 228.5l-3 3l3 3M615.5 228.5l-3 3l3 3M623.5 228.5l-3 3l3 3M631.5 228.5l-3 3l3 3M639.5 228.5l-3 3l3 3M647.5 228.5l-3 3l3 3M655.5 228.5l-3 3l3 3M663.5 228.5l-3 3l3 3M671.5 228.5l-3 3l3 3M679.5 228.5l-3 3l3 3M687.5 228.5l-3 3l3 3M695.5 228.5l-3 3l3 3M703.5 228.5l-3 3l3 3M711.5 228.5l-3 3l3 3M719.5 228.5l-3 3l3 3M727.5 228.5l-3 3l3 3M735.5 228.5l-3 3l3 3M743.5 228.5l-3 3l3 3M751.5 228.5l-3 3l3 3M759.5 228.5l-3 3l3 3M767.5 228.5l-3 3l3 3M775.5 228.5l-3 3l3 3M783.5 228.5l-3 3l3 3M791.5 228.5l-3 3l3 3M799.5 228.5l-3 3l3 3M807.5 228.5l-3 3l3 3M815.5 228.5l-3 3l3 3M823.5 228.5l-3 3l3 3M831.5 228.5l-3 3l3 3M839.5 228.5l-3 3l3 3M847.5 228.5l-3 3l3 3M855.5 228.5l-3 3l3 3M863.5 228.5l-3 3l3 3M871.5 228.5l-3 3l3 3M879.5 228.5l-3 3l3 3M887.5 228.5l-3 3l3 3M895.5 228.5l-3 3l3 3M903.5 228.5l-3 3l3 3M911.5 228.5l-3 3l3 3M919.5 228.5l-3 3l3 3M927.5 228.5l-3 3l3 3M935.5 228.5l-3 3l3 3M943.5 228.5l-3 3l3 3" stroke="#0c0c78" stroke-width="1" fill="none"/>
<text x="91.60" transform="translate(0 251.8) scale(1 1.05)" style="letter-spacing:0.167px;fill:#0c0c78">PLEKHG5</text>
<rect x="156" y="247" width="793" height="1" fill="#0c0c78"/>
<path d="M159.5 244.5l-3 3l3 3M167.5 244.5l-3 3l3 3M175.5 244.5l-3 3l3 3M183.5 244.5l-3 3l3 3M191.5 244.5l-3 3l3 3M199.5 244.5l-3 3l3 3M207.5 244.5l-3 3l3 3M215.5 244.5l-3 3l3 3M223.5 244.5l-3 3l3 3M231.5 244.5l-3 3l3 3M239.5 244.5l-3 3l3 3M247.5 244.5l-3 3l3 3M255.5 244.5l-3 3l3 3M263.5 244.5l-3 3l3 3M271.5 244.5l-3 3l3 3M279.5 244.5l-3 3l3 3M287.5 244.5l-3 3l3 3M295.5 244.5l-3 3l3 3M303.5 244.5l-3 3l3 3M311.5 244.5l-3 3l3 3M319.5 244.5l-3 3l3 3M327.5 244.5l-3 3l3 3M335.5 244.5l-3 3l3 3M343.5 244.5l-3 3l3 3M351.5 244.5l-3 3l3 3M359.5 244.5l-3 3l3 3M367.5 244.5l-3 3l3 3M375.5 244.5l-3 3l3 3M383.5 244.5l-3 3l3 3M391.5 244.5l-3 3l3 3M399.5 244.5l-3 3l3 3M407.5 244.5l-3 3l3 3M415.5 244.5l-3 3l3 3M423.5 244.5l-3 3l3 3M431.5 244.5l-3 3l3 3M439.5 244.5l-3 3l3 3M447.5 244.5l-3 3l3 3M455.5 244.5l-3 3l3 3M463.5 244.5l-3 3l3 3M471.5 244.5l-3 3l3 3M479.5 244.5l-3 3l3 3M487.5 244.5l-3 3l3 3M495.5 244.5l-3 3l3 3M503.5 244.5l-3 3l3 3M511.5 244.5l-3 3l3 3M519.5 244.5l-3 3l3 3M527.5 244.5l-3 3l3 3M535.5 244.5l-3 3l3 3M543.5 244.5l-3 3l3 3M551.5 244.5l-3 3l3 3M559.5 244.5l-3 3l3 3M567.5 244.5l-3 3l3 3M575.5 244.5l-3 3l3 3M583.5 244.5l-3 3l3 3M591.5 244.5l-3 3l3 3M599.5 244.5l-3 3l3 3M607.5 244.5l-3 3l3 3M615.5 244.5l-3 3l3 3M623.5 244.5l-3 3l3 3M631.5 244.5l-3 3l3 3M639.5 244.5l-3 3l3 3M647.5 244.5l-3 3l3 3M655.5 244.5l-3 3l3 3M663.5 244.5l-3 3l3 3M671.5 244.5l-3 3l3 3M679.5 244.5l-3 3l3 3M687.5 244.5l-3 3l3 3M695.5 244.5l-3 3l3 3M703.5 244.5l-3 3l3 3M711.5 244.5l-3 3l3 3M719.5 244.5l-3 3l3 3M727.5 244.5l-3 3l3 3M735.5 244.5l-3 3l3 3M743.5 244.5l-3 3l3 3M751.5 244.5l-3 3l3 3M759.5 244.5l-3 3l3 3M767.5 244.5l-3 3l3 3M775.5 244.5l-3 3l3 3M783.5 244.5l-3 3l3 3M791.5 244.5l-3 3l3 3M799.5 244.5l-3 3l3 3M807.5 244.5l-3 3l3 3M815.5 244.5l-3 3l3 3M823.5 244.5l-3 3l3 3M831.5 244.5l-3 3l3 3M839.5 244.5l-3 3l3 3M847.5 244.5l-3 3l3 3M855.5 244.5l-3 3l3 3M863.5 244.5l-3 3l3 3M871.5 244.5l-3 3l3 3M879.5 244.5l-3 3l3 3M887.5 244.5l-3 3l3 3M895.5 244.5l-3 3l3 3M903.5 244.5l-3 3l3 3M911.5 244.5l-3 3l3 3M919.5 244.5l-3 3l3 3M927.5 244.5l-3 3l3 3M935.5 244.5l-3 3l3 3M943.5 244.5l-3 3l3 3" stroke="#0c0c78" stroke-width="1" fill="none"/>
<text x="91.60" transform="translate(0 267.8) scale(1 1.05)" style="letter-spacing:0.167px;fill:#0c0c78">PLEKHG5</text>
<rect x="156" y="263" width="793" height="1" fill="#0c0c78"/>
<path d="M159.5 260.5l-3 3l3 3M167.5 260.5l-3 3l3 3M175.5 260.5l-3 3l3 3M183.5 260.5l-3 3l3 3M191.5 260.5l-3 3l3 3M199.5 260.5l-3 3l3 3M207.5 260.5l-3 3l3 3M215.5 260.5l-3 3l3 3M223.5 260.5l-3 3l3 3M231.5 260.5l-3 3l3 3M239.5 260.5l-3 3l3 3M247.5 260.5l-3 3l3 3M255.5 260.5l-3 3l3 3M263.5 260.5l-3 3l3 3M271.5 260.5l-3 3l3 3M279.5 260.5l-3 3l3 3M287.5 260.5l-3 3l3 3M295.5 260.5l-3 3l3 3M303.5 260.5l-3 3l3 3M311.5 260.5l-3 3l3 3M319.5 260.5l-3 3l3 3M327.5 260.5l-3 3l3 3M335.5 260.5l-3 3l3 3M343.5 260.5l-3 3l3 3M351.5 260.5l-3 3l3 3M359.5 260.5l-3 3l3 3M367.5 260.5l-3 3l3 3M375.5 260.5l-3 3l3 3M383.5 260.5l-3 3l3 3M391.5 260.5l-3 3l3 3M399.5 260.5l-3 3l3 3M407.5 260.5l-3 3l3 3M415.5 260.5l-3 3l3 3M423.5 260.5l-3 3l3 3M431.5 260.5l-3 3l3 3M439.5 260.5l-3 3l3 3M447.5 260.5l-3 3l3 3M455.5 260.5l-3 3l3 3M463.5 260.5l-3 3l3 3M471.5 260.5l-3 3l3 3M479.5 260.5l-3 3l3 3M487.5 260.5l-3 3l3 3M495.5 260.5l-3 3l3 3M503.5 260.5l-3 3l3 3M511.5 260.5l-3 3l3 3M519.5 260.5l-3 3l3 3M527.5 260.5l-3 3l3 3M535.5 260.5l-3 3l3 3M543.5 260.5l-3 3l3 3M551.5 260.5l-3 3l3 3M559.5 260.5l-3 3l3 3M567.5 260.5l-3 3l3 3M575.5 260.5l-3 3l3 3M583.5 260.5l-3 3l3 3M591.5 260.5l-3 3l3 3M599.5 260.5l-3 3l3 3M607.5 260.5l-3 3l3 3M615.5 260.5l-3 3l3 3M623.5 260.5l-3 3l3 3M631.5 260.5l-3 3l3 3M639.5 260.5l-3 3l3 3M647.5 260.5l-3 3l3 3M655.5 260.5l-3 3l3 3M663.5 260.5l-3 3l3 3M671.5 260.5l-3 3l3 3M679.5 260.5l-3 3l3 3M687.5 260.5l-3 3l3 3M695.5 260.5l-3 3l3 3M703.5 260.5l-3 3l3 3M711.5 260.5l-3 3l3 3M719.5 260.5l-3 3l3 3M727.5 260.5l-3 3l3 3M735.5 260.5l-3 3l3 3M743.5 260.5l-3 3l3 3M751.5 260.5l-3 3l3 3M759.5 260.5l-3 3l3 3M767.5 260.5l-3 3l3 3M775.5 260.5l-3 3l3 3M783.5 260.5l-3 3l3 3M791.5 260.5l-3 3l3 3M799.5 260.5l-3 3l3 3M807.5 260.5l-3 3l3 3M815.5 260.5l-3 3l3 3M823.5 260.5l-3 3l3 3M831.5 260.5l-3 3l3 3M839.5 260.5l-3 3l3 3M847.5 260.5l-3 3l3 3M855.5 260.5l-3 3l3 3M863.5 260.5l-3 3l3 3M871.5 260.5l-3 3l3 3M879.5 260.5l-3 3l3 3M887.5 260.5l-3 3l3 3M895.5 260.5l-3 3l3 3M903.5 260.5l-3 3l3 3M911.5 260.5l-3 3l3 3M919.5 260.5l-3 3l3 3M927.5 260.5l-3 3l3 3M935.5 260.5l-3 3l3 3M943.5 260.5l-3 3l3 3" stroke="#0c0c78" stroke-width="1" fill="none"/>
<text x="91.60" transform="translate(0 283.8) scale(1 1.05)" style="letter-spacing:0.167px;fill:#0c0c78">PLEKHG5</text>
<rect x="156" y="279" width="793" height="1" fill="#0c0c78"/>
<path d="M159.5 276.5l-3 3l3 3M167.5 276.5l-3 3l3 3M175.5 276.5l-3 3l3 3M183.5 276.5l-3 3l3 3M191.5 276.5l-3 3l3 3M199.5 276.5l-3 3l3 3M207.5 276.5l-3 3l3 3M215.5 276.5l-3 3l3 3M223.5 276.5l-3 3l3 3M231.5 276.5l-3 3l3 3M239.5 276.5l-3 3l3 3M247.5 276.5l-3 3l3 3M255.5 276.5l-3 3l3 3M263.5 276.5l-3 3l3 3M271.5 276.5l-3 3l3 3M279.5 276.5l-3 3l3 3M287.5 276.5l-3 3l3 3M295.5 276.5l-3 3l3 3M303.5 276.5l-3 3l3 3M311.5 276.5l-3 3l3 3M319.5 276.5l-3 3l3 3M327.5 276.5l-3 3l3 3M335.5 276.5l-3 3l3 3M343.5 276.5l-3 3l3 3M351.5 276.5l-3 3l3 3M359.5 276.5l-3 3l3 3M367.5 276.5l-3 3l3 3M375.5 276.5l-3 3l3 3M383.5 276.5l-3 3l3 3M391.5 276.5l-3 3l3 3M399.5 276.5l-3 3l3 3M407.5 276.5l-3 3l3 3M415.5 276.5l-3 3l3 3M423.5 276.5l-3 3l3 3M431.5 276.5l-3 3l3 3M439.5 276.5l-3 3l3 3M447.5 276.5l-3 3l3 3M455.5 276.5l-3 3l3 3M463.5 276.5l-3 3l3 3M471.5 276.5l-3 3l3 3M479.5 276.5l-3 3l3 3M487.5 276.5l-3 3l3 3M495.5 276.5l-3 3l3 3M503.5 276.5l-3 3l3 3M511.5 276.5l-3 3l3 3M519.5 276.5l-3 3l3 3M527.5 276.5l-3 3l3 3M535.5 276.5l-3 3l3 3M543.5 276.5l-3 3l3 3M551.5 276.5l-3 3l3 3M559.5 276.5l-3 3l3 3M567.5 276.5l-3 3l3 3M575.5 276.5l-3 3l3 3M583.5 276.5l-3 3l3 3M591.5 276.5l-3 3l3 3M599.5 276.5l-3 3l3 3M607.5 276.5l-3 3l3 3M615.5 276.5l-3 3l3 3M623.5 276.5l-3 3l3 3M631.5 276.5l-3 3l3 3M639.5 276.5l-3 3l3 3M647.5 276.5l-3 3l3 3M655.5 276.5l-3 3l3 3M663.5 276.5l-3 3l3 3M671.5 276.5l-3 3l3 3M679.5 276.5l-3 3l3 3M687.5 276.5l-3 3l3 3M695.5 276.5l-3 3l3 3M703.5 276.5l-3 3l3 3M711.5 276.5l-3 3l3 3M719.5 276.5l-3 3l3 3M727.5 276.5l-3 3l3 3M735.5 276.5l-3 3l3 3M743.5 276.5l-3 3l3 3M751.5 276.5l-3 3l3 3M759.5 276.5l-3 3l3 3M767.5 276.5l-3 3l3 3M775.5 276.5l-3 3l3 3M783.5 276.5l-3 3l3 3M791.5 276.5l-3 3l3 3M799.5 276.5l-3 3l3 3M807.5 276.5l-3 3l3 3M815.5 276.5l-3 3l3 3M823.5 276.5l-3 3l3 3M831.5 276.5l-3 3l3 3M839.5 276.5l-3 3l3 3M847.5 276.5l-3 3l3 3M855.5 276.5l-3 3l3 3M863.5 276.5l-3 3l3 3M871.5 276.5l-3 3l3 3M879.5 276.5l-3 3l3 3M887.5 276.5l-3 3l3 3M895.5 276.5l-3 3l3 3M903.5 276.5l-3 3l3 3M911.5 276.5l-3 3l3 3M919.5 276.5l-3 3l3 3M927.5 276.5l-3 3l3 3M935.5 276.5l-3 3l3 3M943.5 276.5l-3 3l3 3" stroke="#0c0c78" stroke-width="1" fill="none"/>
<text x="91.60" transform="translate(0 299.8) scale(1 1.05)" style="letter-spacing:0.167px;fill:#0c0c78">PLEKHG5</text>
<rect x="156" y="295" width="793" height="1" fill="#0c0c78"/>
<path d="M159.5 292.5l-3 3l3 3M167.5 292.5l-3 3l3 3M175.5 292.5l-3 3l3 3M183.5 292.5l-3 3l3 3M191.5 292.5l-3 3l3 3M199.5 292.5l-3 3l3 3M207.5 292.5l-3 3l3 3M215.5 292.5l-3 3l3 3M223.5 292.5l-3 3l3 3M231.5 292.5l-3 3l3 3M239.5 292.5l-3 3l3 3M247.5 292.5l-3 3l3 3M255.5 292.5l-3 3l3 3M263.5 292.5l-3 3l3 3M271.5 292.5l-3 3l3 3M279.5 292.5l-3 3l3 3M287.5 292.5l-3 3l3 3M295.5 292.5l-3 3l3 3M303.5 292.5l-3 3l3 3M311.5 292.5l-3 3l3 3M319.5 292.5l-3 3l3 3M327.5 292.5l-3 3l3 3M335.5 292.5l-3 3l3 3M343.5 292.5l-3 3l3 3M351.5 292.5l-3 3l3 3M359.5 292.5l-3 3l3 3M367.5 292.5l-3 3l3 3M375.5 292.5l-3 3l3 3M383.5 292.5l-3 3l3 3M391.5 292.5l-3 3l3 3M399.5 292.5l-3 3l3 3M407.5 292.5l-3 3l3 3M415.5 292.5l-3 3l3 3M423.5 292.5l-3 3l3 3M431.5 292.5l-3 3l3 3M439.5 292.5l-3 3l3 3M447.5 292.5l-3 3l3 3M455.5 292.5l-3 3l3 3M463.5 292.5l-3 3l3 3M471.5 292.5l-3 3l3 3M479.5 292.5l-3 3l3 3M487.5 292.5l-3 3l3 3M495.5 292.5l-3 3l3 3M503.5 292.5l-3 3l3 3M511.5 292.5l-3 3l3 3M519.5 292.5l-3 3l3 3M527.5 292.5l-3 3l3 3M535.5 292.5l-3 3l3 3M543.5 292.5l-3 3l3 3M551.5 292.5l-3 3l3 3M559.5 292.5l-3 3l3 3M567.5 292.5l-3 3l3 3M575.5 292.5l-3 3l3 3M583.5 292.5l-3 3l3 3M591.5 292.5l-3 3l3 3M599.5 292.5l-3 3l3 3M607.5 292.5l-3 3l3 3M615.5 292.5l-3 3l3 3M623.5 292.5l-3 3l3 3M631.5 292.5l-3 3l3 3M639.5 292.5l-3 3l3 3M647.5 292.5l-3 3l3 3M655.5 292.5l-3 3l3 3M663.5 292.5l-3 3l3 3M671.5 292.5l-3 3l3 3M679.5 292.5l-3 3l3 3M687.5 292.5l-3 3l3 3M695.5 292.5l-3 3l3 3M703.5 292.5l-3 3l3 3M711.5 292.5l-3 3l3 3M719.5 292.5l-3 3l3 3M727.5 292.5l-3 3l3 3M735.5 292.5l-3 3l3 3M743.5 292.5l-3 3l3 3M751.5 292.5l-3 3l3 3M759.5 292.5l-3 3l3 3M767.5 292.5l-3 3l3 3M775.5 292.5l-3 3l3 3M783.5 292.5l-3 3l3 3M791.5 292.5l-3 3l3 3M799.5 292.5l-3 3l3 3M807.5 292.5l-3 3l3 3M815.5 292.5l-3 3l3 3M823.5 292.5l-3 3l3 3M831.5 292.5l-3 3l3 3M839.5 292.5l-3 3l3 3M847.5 292.5l-3 3l3 3M855.5 292.5l-3 3l3 3M863.5 292.5l-3 3l3 3M871.5 292.5l-3 3l3 3M879.5 292.5l-3 3l3 3M887.5 292.5l-3 3l3 3M895.5 292.5l-3 3l3 3M903.5 292.5l-3 3l3 3M911.5 292.5l-3 3l3 3M919.5 292.5l-3 3l3 3M927.5 292.5l-3 3l3 3M935.5 292.5l-3 3l3 3M943.5 292.5l-3 3l3 3" stroke="#0c0c78" stroke-width="1" fill="none"/>
<text x="91.60" transform="translate(0 315.8) scale(1 1.05)" style="letter-spacing:0.167px;fill:#0c0c78">PLEKHG5</text>
<rect x="156" y="311" width="793" height="1" fill="#0c0c78"/>
<path d="M159.5 308.5l-3 3l3 3M167.5 308.5l-3 3l3 3M175.5 308.5l-3 3l3 3M183.5 308.5l-3 3l3 3M191.5 308.5l-3 3l3 3M199.5 308.5l-3 3l3 3M207.5 308.5l-3 3l3 3M215.5 308.5l-3 3l3 3M223.5 308.5l-3 3l3 3M231.5 308.5l-3 3l3 3M239.5 308.5l-3 3l3 3M247.5 308.5l-3 3l3 3M255.5 308.5l-3 3l3 3M263.5 308.5l-3 3l3 3M271.5 308.5l-3 3l3 3M279.5 308.5l-3 3l3 3M287.5 308.5l-3 3l3 3M295.5 308.5l-3 3l3 3M303.5 308.5l-3 3l3 3M311.5 308.5l-3 3l3 3M319.5 308.5l-3 3l3 3M327.5 308.5l-3 3l3 3M335.5 308.5l-3 3l3 3M343.5 308.5l-3 3l3 3M351.5 308.5l-3 3l3 3M359.5 308.5l-3 3l3 3M367.5 308.5l-3 3l3 3M375.5 308.5l-3 3l3 3M383.5 308.5l-3 3l3 3M391.5 308.5l-3 3l3 3M399.5 308.5l-3 3l3 3M407.5 308.5l-3 3l3 3M415.5 308.5l-3 3l3 3M423.5 308.5l-3 3l3 3M431.5 308.5l-3 3l3 3M439.5 308.5l-3 3l3 3M447.5 308.5l-3 3l3 3M455.5 308.5l-3 3l3 3M463.5 308.5l-3 3l3 3M471.5 308.5l-3 3l3 3M479.5 308.5l-3 3l3 3M487.5 308.5l-3 3l3 3M495.5 308.5l-3 3l3 3M503.5 308.5l-3 3l3 3M511.5 308.5l-3 3l3 3M519.5 308.5l-3 3l3 3M527.5 308.5l-3 3l3 3M535.5 308.5l-3 3l3 3M543.5 308.5l-3 3l3 3M551.5 308.5l-3 3l3 3M559.5 308.5l-3 3l3 3M567.5 308.5l-3 3l3 3M575.5 308.5l-3 3l3 3M583.5 308.5l-3 3l3 3M591.5 308.5l-3 3l3 3M599.5 308.5l-3 3l3 3M607.5 308.5l-3 3l3 3M615.5 308.5l-3 3l3 3M623.5 308.5l-3 3l3 3M631.5 308.5l-3 3l3 3M639.5 308.5l-3 3l3 3M647.5 308.5l-3 3l3 3M655.5 308.5l-3 3l3 3M663.5 308.5l-3 3l3 3M671.5 308.5l-3 3l3 3M679.5 308.5l-3 3l3 3M687.5 308.5l-3 3l3 3M695.5 308.5l-3 3l3 3M703.5 308.5l-3 3l3 3M711.5 308.5l-3 3l3 3M719.5 308.5l-3 3l3 3M727.5 308.5l-3 3l3 3M735.5 308.5l-3 3l3 3M743.5 308.5l-3 3l3 3M751.5 308.5l-3 3l3 3M759.5 308.5l-3 3l3 3M767.5 308.5l-3 3l3 3M775.5 308.5l-3 3l3 3M783.5 308.5l-3 3l3 3M791.5 308.5l-3 3l3 3M799.5 308.5l-3 3l3 3M807.5 308.5l-3 3l3 3M815.5 308.5l-3 3l3 3M823.5 308.5l-3 3l3 3M831.5 308.5l-3 3l3 3M839.5 308.5l-3 3l3 3M847.5 308.5l-3 3l3 3M855.5 308.5l-3 3l3 3M863.5 308.5l-3 3l3 3M871.5 308.5l-3 3l3 3M879.5 308.5l-3 3l3 3M887.5 308.5l-3 3l3 3M895.5 308.5l-3 3l3 3M903.5 308.5l-3 3l3 3M911.5 308.5l-3 3l3 3M919.5 308.5l-3 3l3 3M927.5 308.5l-3 3l3 3M935.5 308.5l-3 3l3 3M943.5 308.5l-3 3l3 3" stroke="#0c0c78" stroke-width="1" fill="none"/>
<text x="491.90" transform="translate(0 331.8) scale(1 1.05)" style="letter-spacing:-0.062px;font-size:11px">RefSeq genes from NCBI</text>
<text x="59.60" transform="translate(0 346.8) scale(1 1.05)" style="letter-spacing:-0.031px;fill:#0c0c78">RefSeq Curated</text>
<rect x="157" y="342" width="792" height="1" fill="#0c0c78"/>
<text x="445.60" transform="translate(0 362.6) scale(1 1.05)" style="letter-spacing:-0.078px;font-size:11px">Publications: Sequences in Scientific Articles</text>
<text x="87.60" transform="translate(0 377.8) scale(1 1.05)" style="letter-spacing:-0.100px">Sequences</text>
<text x="118.40" transform="translate(0 393.7) scale(1 1.05)" style="letter-spacing:0.133px">SNPs</text>
<rect x="156" y="413" width="793" height="15" fill="#005000"/>
<text x="368.10" transform="translate(0 410.6) scale(1 1.05)" style="letter-spacing:0.035px;fill:#055a05">OMIM Gene Phenotypes - Dark Green Can Be Disease-causing</text>
<text x="74.10" transform="translate(0 424.7) scale(1 1.05)" style="letter-spacing:0.078px;fill:#055a05">OMIM Genes</text>
<text x="436.30" transform="translate(0 440.9) scale(1 1.05)" style="letter-spacing:-0.018px;font-size:11px">Short Genetic Variants from dbSNP release 155</text>
<text x="26.40" transform="translate(0 455.4) scale(1 1.05)" style="letter-spacing:-0.075px">Common dbSNP(155)</text>
<text x="266.40" transform="translate(0 472.7) scale(1 1.05)" style="letter-spacing:0.053px">Gene Expression in 54 tissues from GTEx RNA-seq of 17382 samples, 948 donors (V8, Aug 2019)</text>
<rect x="156.5" y="476.5" width="377" height="70" fill="#fff" stroke="#ececec"/>
<rect x="156" y="508" width="5" height="38" fill="#FFA54F"/>
<rect x="163" y="509" width="5" height="37" fill="#EE9A00"/>
<rect x="170" y="512" width="5" height="34" fill="#8FBC8F"/>
<rect x="177" y="510" width="5" height="36" fill="#8B1C62"/>
<rect x="184" y="513" width="5" height="33" fill="#EE6A50"/>
<rect x="191" y="524" width="5" height="22" fill="#FF0000"/>
<rect x="198" y="514" width="5" height="32" fill="#CDB79E"/>
<rect x="205" y="517" width="5" height="29" fill="#EEEE00"/>
<rect x="212" y="508" width="5" height="38" fill="#EEEE00"/>
<rect x="219" y="518" width="5" height="28" fill="#EEEE00"/>
<rect x="226" y="478" width="5" height="68" fill="#EEEE00"/>
<rect x="233" y="476" width="5" height="70" fill="#EEEE00"/>
<rect x="240" y="500" width="5" height="46" fill="#EEEE00"/>
<rect x="247" y="503" width="5" height="43" fill="#EEEE00"/>
<rect x="254" y="510" width="5" height="36" fill="#EEEE00"/>
<rect x="261" y="520" width="5" height="26" fill="#EEEE00"/>
<rect x="268" y="513" width="5" height="33" fill="#EEEE00"/>
<rect x="275" y="525" width="5" height="21" fill="#EEEE00"/>
<rect x="282" y="527" width="5" height="19" fill="#EEEE00"/>
<rect x="289" y="528" width="5" height="18" fill="#EEEE00"/>
<rect x="296" y="508" width="5" height="38" fill="#00CDCD"/>
<rect x="303" y="541" width="5" height="5" fill="#EE82EE"/>
<rect x="310" y="527" width="5" height="19" fill="#9AC0CD"/>
<rect x="317" y="505" width="5" height="41" fill="#EED5D2"/>
<rect x="324" y="504" width="5" height="42" fill="#EED5D2"/>
<rect x="331" y="515" width="5" height="31" fill="#CDB79E"/>
<rect x="338" y="515" width="5" height="31" fill="#EEC591"/>
<rect x="345" y="514" width="5" height="32" fill="#8B7355"/>
<rect x="352" y="502" width="5" height="44" fill="#8B7355"/>
<rect x="359" y="514" width="5" height="32" fill="#CDAA7D"/>
<rect x="366" y="509" width="5" height="37" fill="#EED5D2"/>
<rect x="373" y="519" width="5" height="27" fill="#B452CD"/>
<rect x="380" y="518" width="5" height="28" fill="#7A378B"/>
<rect x="387" y="523" width="5" height="23" fill="#CDB79E"/>
<rect x="394" y="521" width="5" height="25" fill="#CDB79E"/>
<rect x="401" y="536" width="5" height="10" fill="#CDB79E"/>
<rect x="408" y="514" width="5" height="32" fill="#9ACD32"/>
<rect x="415" y="512" width="5" height="34" fill="#CDB79E"/>
<rect x="422" y="532" width="5" height="14" fill="#7A67EE"/>
<rect x="429" y="496" width="5" height="50" fill="#FFD700"/>
<rect x="436" y="512" width="5" height="34" fill="#FFB6C1"/>
<rect x="443" y="532" width="5" height="14" fill="#CD9B1D"/>
<rect x="450" y="490" width="5" height="56" fill="#B4EEB4"/>
<rect x="457" y="509" width="5" height="37" fill="#D9D9D9"/>
<rect x="464" y="485" width="5" height="61" fill="#3A5FCD"/>
<rect x="471" y="487" width="5" height="59" fill="#1E90FF"/>
<rect x="478" y="514" width="5" height="32" fill="#CDB79E"/>
<rect x="485" y="490" width="5" height="56" fill="#CDB79E"/>
<rect x="492" y="523" width="5" height="23" fill="#FFD39B"/>
<rect x="499" y="514" width="5" height="32" fill="#A6A6A6"/>
<rect x="506" y="511" width="5" height="35" fill="#008B45"/>
<rect x="513" y="509" width="5" height="37" fill="#EED5D2"/>
<rect x="520" y="504" width="5" height="42" fill="#EED5D2"/>
<rect x="527" y="543" width="5" height="3" fill="#FF00FF"/>
<rect x="156" y="547" width="793" height="2" fill="#000078"/>
<text x="91.70" transform="translate(0 517.8) scale(1 1.05)" style="letter-spacing:0.083px">PLEKHG5</text>
<text x="280.60" transform="translate(0 563.7) scale(1 1.05)" style="letter-spacing:0.058px">H3K27Ac Mark (Often Found Near Active Regulatory Elements) on 7 cell lines from ENCODE</text>
<text x="12.30" transform="translate(0 577.6) scale(1 1.05)" style="letter-spacing:0.043px">Layered H3K27Ac</text>
<rect x="156" y="572" width="793" height="19" fill="#80d4ff"/>
<rect x="156" y="591" width="793" height="4" fill="#6868ff"/>
<rect x="156" y="595" width="793" height="1" fill="#5c2064"/>
<text x="115.80" transform="translate(0 608.9) scale(1 1.05)" style="letter-spacing:0.300px;fill:#3c3c8c">4.88</text>
<rect x="145" y="610" width="8" height="1" fill="#3c3c8c"/>
<text x="404.80" transform="translate(0 609.5) scale(1 1.05)" style="letter-spacing:0.039px;fill:#3c3c8c">100 vertebrates Basewise Conservation by PhyloP</text>
<text x="12.50" transform="translate(0 633.6) scale(1 1.05)" style="letter-spacing:0.092px;fill:#3c3c8c">100 Vert. Cons</text>
<text x="119.20" transform="translate(0 658.9) scale(1 1.05)" style="letter-spacing:0.167px;fill:#8c3434">-4.5</text>
<rect x="145" y="660" width="8" height="1" fill="#8c3434"/>
<rect x="166" y="644" width="20" height="2" fill="#fff"/>
<rect x="563" y="647.3" width="24" height="3" fill="#fff"/>
<rect x="761" y="634.2" width="26" height="2" fill="#fff"/>
<rect x="861" y="639" width="24" height="4.2" fill="#fff"/>
<rect x="910" y="639.2" width="28" height="2" fill="#fff"/>
<rect x="366" y="638.8" width="22" height="1.2" fill="#fff"/>
<text transform="matrix(2.9333 0 0 0.3706 157.29 642.90)" style="font-size:20px;fill:#ff0000">A</text>
<text transform="matrix(3.1402 0 0 0.2825 155.84 646.84)" style="font-size:20px;fill:#0000ff">G</text>
<text transform="matrix(3.1657 0 0 0.2108 205.38 641.20)" style="font-size:20px;fill:#00ff00">T</text>
<text transform="matrix(3.0238 0 0 0.2119 354.83 641.16)" style="font-size:20px;fill:#a09600">C</text>
<text transform="matrix(3.4487 0 0 0.0727 354.45 642.20)" style="font-size:20px;fill:#00ff00">T</text>
<text transform="matrix(3.1657 0 0 0.5451 552.68 645.80)" style="font-size:20px;fill:#00ff00">T</text>
<text transform="matrix(3.0396 0 0 0.4237 552.71 651.72)" style="font-size:20px;fill:#a09600">C</text>
<text transform="matrix(3.1402 0 0 0.1907 552.64 654.36)" style="font-size:20px;fill:#0000ff">G</text>
<text transform="matrix(2.8201 0 0 0.1017 554.89 656.10)" style="font-size:20px;fill:#ff0000">A</text>
<text transform="matrix(3.1478 0 0 0.0706 603.13 638.59)" style="font-size:20px;fill:#0000ff">G</text>
<text transform="matrix(2.9528 0 0 0.0706 702.30 638.99)" style="font-size:20px;fill:#a09600">C</text>
<text transform="matrix(3.0080 0 0 0.3037 751.34 637.24)" style="font-size:20px;fill:#a09600">C</text>
<text transform="matrix(3.0712 0 0 0.5085 849.78 644.90)" style="font-size:20px;fill:#a09600">C</text>
<text transform="matrix(3.1834 0 0 0.4143 849.57 650.90)" style="font-size:20px;fill:#00ff00">T</text>
<text transform="matrix(2.8503 0 0 0.1090 851.99 652.30)" style="font-size:20px;fill:#ff0000">A</text>
<text transform="matrix(3.1938 0 0 0.5085 899.29 645.00)" style="font-size:20px;fill:#0000ff">G</text>
<text transform="matrix(2.8352 0 0 0.1090 901.89 647.10)" style="font-size:20px;fill:#ff0000">A</text>
<text transform="matrix(3.0950 0 0 0.0872 901.61 648.20)" style="font-size:20px;fill:#00ff00">T</text>
<text x="444.50" transform="translate(0 675.8) scale(1 1.05)" style="letter-spacing:0.123px;fill:#00005a">Multiz Alignments of 100 Vertebrates</text>
<text x="121.70" transform="translate(0 689.6) scale(1 1.05)" style="letter-spacing:-0.267px;fill:#e08a14">Gaps</text>
<text x="110.70" transform="translate(0 704.6) scale(1 1.05)" style="letter-spacing:-0.050px;fill:#14146e">Human</text>
<text x="178.7" transform="translate(0 705) scale(1 1.05)" class="c bl">G</text>
<text x="228.2" transform="translate(0 705) scale(1 1.05)" class="c bl">T</text>
<text x="277.8" transform="translate(0 705) scale(1 1.05)" class="c bl">G</text>
<text x="327.3" transform="translate(0 705) scale(1 1.05)" class="c bl">C</text>
<text x="376.9" transform="translate(0 705) scale(1 1.05)" class="c bl">C</text>
<text x="426.5" transform="translate(0 705) scale(1 1.05)" class="c bl">C</text>
<text x="476.0" transform="translate(0 705) scale(1 1.05)" class="c bl">C</text>
<text x="525.6" transform="translate(0 705) scale(1 1.05)" class="c bl">C</text>
<text x="575.1" transform="translate(0 705) scale(1 1.05)" class="c bl">T</text>
<text x="624.7" transform="translate(0 705) scale(1 1.05)" class="c bl">G</text>
<text x="674.2" transform="translate(0 705) scale(1 1.05)" class="c bl">G</text>
<text x="723.8" transform="translate(0 705) scale(1 1.05)" class="c bl">C</text>
<text x="773.4" transform="translate(0 705) scale(1 1.05)" class="c bl">C</text>
<text x="822.9" transform="translate(0 705) scale(1 1.05)" class="c bl">T</text>
<text x="872.5" transform="translate(0 705) scale(1 1.05)" class="c bl">C</text>
<text x="922.1" transform="translate(0 705) scale(1 1.05)" class="c bl">G</text>
<text x="107.40" transform="translate(0 719.6) scale(1 1.05)" style="letter-spacing:0.100px;fill:#14146e">Rhesus</text>
<text x="178.7" transform="translate(0 720) scale(1 1.05)" class="c bl">G</text>
<text x="228.2" transform="translate(0 720) scale(1 1.05)" class="c bl">T</text>
<text x="277.8" transform="translate(0 720) scale(1 1.05)" class="c bl">G</text>
<text x="327.3" transform="translate(0 720) scale(1 1.05)" class="c bl">C</text>
<text x="376.9" transform="translate(0 720) scale(1 1.05)" class="c bl">C</text>
<text x="426.5" transform="translate(0 720) scale(1 1.05)" class="c bl">C</text>
<text x="476.0" transform="translate(0 720) scale(1 1.05)" class="c bl">C</text>
<text x="525.6" transform="translate(0 720) scale(1 1.05)" class="c bl">C</text>
<text x="575.1" transform="translate(0 720) scale(1 1.05)" class="c bl">T</text>
<text x="624.7" transform="translate(0 720) scale(1 1.05)" class="c bl">G</text>
<text x="674.2" transform="translate(0 720) scale(1 1.05)" class="c bl">G</text>
<text x="723.8" transform="translate(0 720) scale(1 1.05)" class="c bl">C</text>
<text x="773.4" transform="translate(0 720) scale(1 1.05)" class="c bl">C</text>
<text x="822.9" transform="translate(0 720) scale(1 1.05)" class="c bl">T</text>
<text x="872.5" transform="translate(0 720) scale(1 1.05)" class="c bl">C</text>
<text x="922.1" transform="translate(0 720) scale(1 1.05)" class="c bl">G</text>
<text x="112.70" transform="translate(0 734.6) scale(1 1.05)" style="letter-spacing:0.200px;fill:#0f640f">Mouse</text>
<path d="M175 730.5h7M175 733.5h7" stroke="#8c8cb0" fill="none" shape-rendering="crispEdges"/>
<path d="M224 730.5h7M224 733.5h7" stroke="#8c8cb0" fill="none" shape-rendering="crispEdges"/>
<path d="M274 730.5h7M274 733.5h7" stroke="#8c8cb0" fill="none" shape-rendering="crispEdges"/>
<path d="M324 730.5h7M324 733.5h7" stroke="#8c8cb0" fill="none" shape-rendering="crispEdges"/>
<path d="M373 730.5h7M373 733.5h7" stroke="#8c8cb0" fill="none" shape-rendering="crispEdges"/>
<path d="M423 730.5h7M423 733.5h7" stroke="#8c8cb0" fill="none" shape-rendering="crispEdges"/>
<path d="M472 730.5h7M472 733.5h7" stroke="#8c8cb0" fill="none" shape-rendering="crispEdges"/>
<path d="M522 730.5h7M522 733.5h7" stroke="#8c8cb0" fill="none" shape-rendering="crispEdges"/>
<path d="M571 730.5h7M571 733.5h7" stroke="#8c8cb0" fill="none" shape-rendering="crispEdges"/>
<path d="M621 730.5h7M621 733.5h7" stroke="#8c8cb0" fill="none" shape-rendering="crispEdges"/>
<path d="M670 730.5h7M670 733.5h7" stroke="#8c8cb0" fill="none" shape-rendering="crispEdges"/>
<path d="M720 730.5h7M720 733.5h7" stroke="#8c8cb0" fill="none" shape-rendering="crispEdges"/>
<path d="M770 730.5h7M770 733.5h7" stroke="#8c8cb0" fill="none" shape-rendering="crispEdges"/>
<path d="M819 730.5h7M819 733.5h7" stroke="#8c8cb0" fill="none" shape-rendering="crispEdges"/>
<path d="M869 730.5h7M869 733.5h7" stroke="#8c8cb0" fill="none" shape-rendering="crispEdges"/>
<path d="M918 730.5h7M918 733.5h7" stroke="#8c8cb0" fill="none" shape-rendering="crispEdges"/>
<text x="128.65" transform="translate(0 749.6) scale(1 1.05)" style="letter-spacing:0.300px;fill:#14146e">Dog</text>
<text x="178.7" transform="translate(0 750) scale(1 1.05)" class="c lt">A</text>
<text x="228.2" transform="translate(0 750) scale(1 1.05)" class="c bl">T</text>
<text x="277.8" transform="translate(0 750) scale(1 1.05)" class="c lt">-</text>
<text x="327.3" transform="translate(0 750) scale(1 1.05)" class="c lt">-</text>
<text x="376.9" transform="translate(0 750) scale(1 1.05)" class="c lt">T</text>
<text x="426.5" transform="translate(0 750) scale(1 1.05)" class="c lt">T</text>
<text x="476.0" transform="translate(0 750) scale(1 1.05)" class="c bl">C</text>
<text x="525.6" transform="translate(0 750) scale(1 1.05)" class="c bl">C</text>
<text x="575.1" transform="translate(0 750) scale(1 1.05)" class="c lt">C</text>
<text x="624.7" transform="translate(0 750) scale(1 1.05)" class="c lt">-</text>
<text x="674.2" transform="translate(0 750) scale(1 1.05)" class="c lt">A</text>
<text x="723.8" transform="translate(0 750) scale(1 1.05)" class="c bl">C</text>
<text x="773.4" transform="translate(0 750) scale(1 1.05)" class="c bl">C</text>
<text x="822.9" transform="translate(0 750) scale(1 1.05)" class="c bl">T</text>
<text x="872.5" transform="translate(0 750) scale(1 1.05)" class="c lt">A</text>
<text x="922.1" transform="translate(0 750) scale(1 1.05)" class="c bl">G</text>
<text x="100.50" transform="translate(0 764.6) scale(1 1.05)" style="letter-spacing:0.000px;fill:#0f640f">Elephant</text>
<text x="178.7" transform="translate(0 765) scale(1 1.05)" class="c lt">A</text>
<text x="228.2" transform="translate(0 765) scale(1 1.05)" class="c bl">T</text>
<text x="277.8" transform="translate(0 765) scale(1 1.05)" class="c lt">A</text>
<text x="327.3" transform="translate(0 765) scale(1 1.05)" class="c bl">C</text>
<text x="376.9" transform="translate(0 765) scale(1 1.05)" class="c bl">C</text>
<text x="426.5" transform="translate(0 765) scale(1 1.05)" class="c bl">C</text>
<text x="476.0" transform="translate(0 765) scale(1 1.05)" class="c bl">C</text>
<text x="525.6" transform="translate(0 765) scale(1 1.05)" class="c bl">C</text>
<text x="575.1" transform="translate(0 765) scale(1 1.05)" class="c bl">T</text>
<text x="624.7" transform="translate(0 765) scale(1 1.05)" class="c bl">G</text>
<text x="674.2" transform="translate(0 765) scale(1 1.05)" class="c lt">A</text>
<text x="723.8" transform="translate(0 765) scale(1 1.05)" class="c bl">C</text>
<text x="773.4" transform="translate(0 765) scale(1 1.05)" class="c bl">C</text>
<text x="822.9" transform="translate(0 765) scale(1 1.05)" class="c lt">A</text>
<text x="872.5" transform="translate(0 765) scale(1 1.05)" class="c lt">T</text>
<text x="922.1" transform="translate(0 765) scale(1 1.05)" class="c bl">G</text>
<text x="105.40" transform="translate(0 779.6) scale(1 1.05)" style="letter-spacing:0.017px;fill:#0f640f">Chicken</text>
<path d="M175 775.5h7M175 778.5h7" stroke="#8c8cb0" fill="none" shape-rendering="crispEdges"/>
<path d="M224 775.5h7M224 778.5h7" stroke="#8c8cb0" fill="none" shape-rendering="crispEdges"/>
<path d="M274 775.5h7M274 778.5h7" stroke="#8c8cb0" fill="none" shape-rendering="crispEdges"/>
<path d="M324 775.5h7M324 778.5h7" stroke="#8c8cb0" fill="none" shape-rendering="crispEdges"/>
<path d="M373 775.5h7M373 778.5h7" stroke="#8c8cb0" fill="none" shape-rendering="crispEdges"/>
<path d="M423 775.5h7M423 778.5h7" stroke="#8c8cb0" fill="none" shape-rendering="crispEdges"/>
<path d="M472 775.5h7M472 778.5h7" stroke="#8c8cb0" fill="none" shape-rendering="crispEdges"/>
<path d="M522 775.5h7M522 778.5h7" stroke="#8c8cb0" fill="none" shape-rendering="crispEdges"/>
<path d="M571 775.5h7M571 778.5h7" stroke="#8c8cb0" fill="none" shape-rendering="crispEdges"/>
<path d="M621 775.5h7M621 778.5h7" stroke="#8c8cb0" fill="none" shape-rendering="crispEdges"/>
<path d="M670 775.5h7M670 778.5h7" stroke="#8c8cb0" fill="none" shape-rendering="crispEdges"/>
<path d="M720 775.5h7M720 778.5h7" stroke="#8c8cb0" fill="none" shape-rendering="crispEdges"/>
<path d="M770 775.5h7M770 778.5h7" stroke="#8c8cb0" fill="none" shape-rendering="crispEdges"/>
<path d="M819 775.5h7M819 778.5h7" stroke="#8c8cb0" fill="none" shape-rendering="crispEdges"/>
<path d="M869 775.5h7M869 778.5h7" stroke="#8c8cb0" fill="none" shape-rendering="crispEdges"/>
<path d="M918 775.5h7M918 778.5h7" stroke="#8c8cb0" fill="none" shape-rendering="crispEdges"/>
<text x="84.20" transform="translate(0 794.6) scale(1 1.05)" style="letter-spacing:0.064px;fill:#14146e">X_tropicalis</text>
<path d="M175 790.5h7M175 793.5h7" stroke="#8c8cb0" fill="none" shape-rendering="crispEdges"/>
<path d="M224 790.5h7M224 793.5h7" stroke="#8c8cb0" fill="none" shape-rendering="crispEdges"/>
<path d="M274 790.5h7M274 793.5h7" stroke="#8c8cb0" fill="none" shape-rendering="crispEdges"/>
<path d="M324 790.5h7M324 793.5h7" stroke="#8c8cb0" fill="none" shape-rendering="crispEdges"/>
<path d="M373 790.5h7M373 793.5h7" stroke="#8c8cb0" fill="none" shape-rendering="crispEdges"/>
<path d="M423 790.5h7M423 793.5h7" stroke="#8c8cb0" fill="none" shape-rendering="crispEdges"/>
<path d="M472 790.5h7M472 793.5h7" stroke="#8c8cb0" fill="none" shape-rendering="crispEdges"/>
<path d="M522 790.5h7M522 793.5h7" stroke="#8c8cb0" fill="none" shape-rendering="crispEdges"/>
<path d="M571 790.5h7M571 793.5h7" stroke="#8c8cb0" fill="none" shape-rendering="crispEdges"/>
<path d="M621 790.5h7M621 793.5h7" stroke="#8c8cb0" fill="none" shape-rendering="crispEdges"/>
<path d="M670 790.5h7M670 793.5h7" stroke="#8c8cb0" fill="none" shape-rendering="crispEdges"/>
<path d="M720 790.5h7M720 793.5h7" stroke="#8c8cb0" fill="none" shape-rendering="crispEdges"/>
<path d="M770 790.5h7M770 793.5h7" stroke="#8c8cb0" fill="none" shape-rendering="crispEdges"/>
<path d="M819 790.5h7M819 793.5h7" stroke="#8c8cb0" fill="none" shape-rendering="crispEdges"/>
<path d="M869 790.5h7M869 793.5h7" stroke="#8c8cb0" fill="none" shape-rendering="crispEdges"/>
<path d="M918 790.5h7M918 793.5h7" stroke="#8c8cb0" fill="none" shape-rendering="crispEdges"/>
<text x="98.20" transform="translate(0 809.6) scale(1 1.05)" style="letter-spacing:0.037px;fill:#0f640f">Zebrafish</text>
<text x="440.80" transform="translate(0 825.5) scale(1 1.05)" style="letter-spacing:0.030px">Repeating Elements by RepeatMasker</text>
<text x="67.70" transform="translate(0 839.7) scale(1 1.05)" style="letter-spacing:-0.018px">RepeatMasker</text>
</svg></body></html>
